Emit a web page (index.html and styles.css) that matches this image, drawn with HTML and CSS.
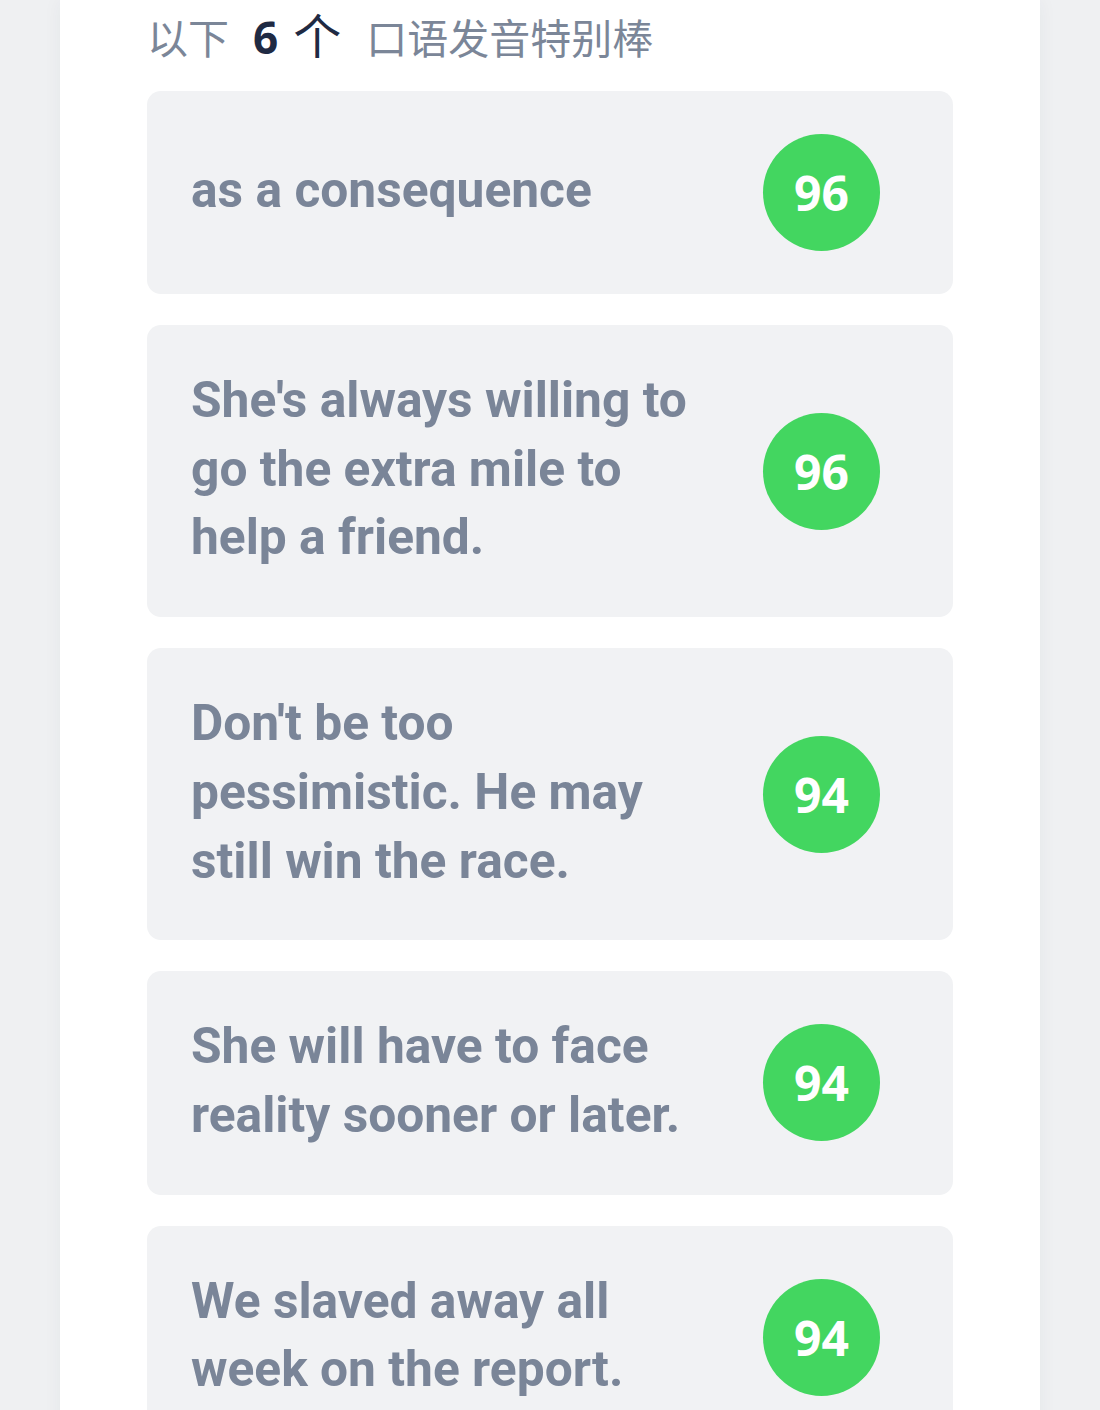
FILE: index.html
```html
<!DOCTYPE html>
<html lang="zh">
<head>
<meta charset="utf-8">
<title>口语发音</title>
<link rel="stylesheet" href="styles.css">
</head>
<body>
<div class="page">
  <main class="panel">
    <h2 class="heading">
      <span class="muted">以下</span>
      <strong class="count">6</strong>
      <span class="unit">个</span>
      <span class="muted tail">口语发音特别棒</span>
    </h2>
    <ul class="list">
      <li class="card"><p class="sentence">as a consequence</p><span class="score">96</span></li>
      <li class="card"><p class="sentence">She's always willing to go the extra mile to help a friend.</p><span class="score">96</span></li>
      <li class="card"><p class="sentence">Don't be too pessimistic. He may still win the race.</p><span class="score">94</span></li>
      <li class="card"><p class="sentence">She will have to face reality sooner or later.</p><span class="score">94</span></li>
      <li class="card"><p class="sentence">We slaved away all week on the report.</p><span class="score">94</span></li>
      <li class="card"><p class="sentence">Practice makes perfect.</p><span class="score">93</span></li>
    </ul>
  </main>
</div>
</body>
</html>
```
FILE: styles.css
```css
html, body {
  margin: 0;
  padding: 0;
  background: #eff0f2;
}
body {
  font-family: Roboto, "Noto Sans CJK SC", sans-serif;
  overflow: hidden;
  height: 1410px;
}
.page {
  padding: 0 60px;
}
.panel {
  background: #ffffff;
  box-shadow: 0 0 18px rgba(40, 50, 70, 0.05);
  padding: 5px 87px 40px;
  min-height: 1410px;
  box-sizing: border-box;
}
.heading {
  margin: 0 0 30px;
  display: flex;
  align-items: baseline;
  height: 56px;
  font-family: "Noto Sans CJK SC", sans-serif;
  font-size: 41px;
  font-weight: 400;
  color: #7b8698;
  line-height: 56px;
  padding-left: 0;
}
.count {
  font-family: "Open Sans", "Noto Sans", sans-serif;
  font-weight: 700;
  color: #1f2a43;
  font-size: 44px;
  margin: 0 15px 0 24px;
}
.unit {
  color: #1f2a43;
  font-size: 48px;
}
.tail {
  margin-left: 25px;
}
.list {
  list-style: none;
  margin: 0;
  padding: 0;
  display: flex;
  flex-direction: column;
  gap: 31px;
}
.card {
  background: #f1f2f4;
  border-radius: 14px;
  padding: 43px 73px 43px 44px;
  display: flex;
  align-items: center;
  gap: 52px;
}
.sentence {
  flex: 1;
  margin: -2px 0 2px;
  font-family: Roboto, sans-serif;
  font-weight: 700;
  font-size: 49.7px;
  line-height: 68.7px;
  color: #7a8598;
}
.score {
  flex: 0 0 117px;
  width: 117px;
  height: 117px;
  border-radius: 50%;
  background: #43d660;
  color: #ffffff;
  display: flex;
  align-items: center;
  justify-content: center;
  font-family: "Open Sans", "Noto Sans", sans-serif;
  font-weight: 700;
  font-size: 48px;
}
```
